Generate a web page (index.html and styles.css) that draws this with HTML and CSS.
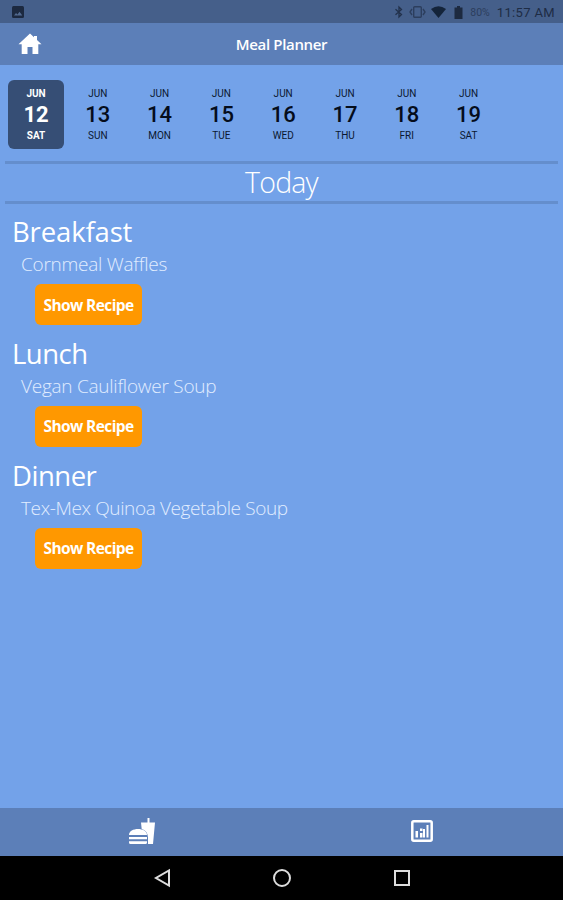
FILE: index.html
```html
<!DOCTYPE html>
<html lang="en">
  <head>
    <meta charset="UTF-8" />
    <meta name="viewport" content="width=device-width, initial-scale=1.0" />
    <title>Meal Planner</title>
    <link rel="stylesheet" href="styles.css">
  </head>
  <body>
    <div class="status-bar">
      <svg class="photo" width="12" height="12" viewBox="0 0 12 12">
        <rect width="12" height="12" rx="1.5" fill="#1c2940" />
        <path d="M2 9.5l2-2.600 1.500 1.600 2-2.800 2.800 3.800z" fill="#526a90" />
      </svg>
      <svg class="bluetooth" width="10" height="14" viewBox="0 0 10 14" fill="none" stroke="#22314b" stroke-width="1.300">
        <path d="M1.500 4.300L7.500 9.500 5 12V2l2.500 2.500-6 5.200" />
      </svg>
      <svg class="vibrate" width="17" height="12" viewBox="0 0 17 12" fill="none" stroke="#2c3e5d" stroke-width="1.400">
        <rect x="4.700" y=".8" width="7.600" height="10.400" rx="1" />
        <path d="M3 3L1 6l2 3M14 3l2 3-2 3" />
      </svg>
      <svg class="wifi" width="15" height="12" viewBox="0 0 15 12">
        <path d="M0 3Q7.500-2.500 15 3L7.500 12z" fill="#14243a" />
      </svg>
      <svg class="battery" width="9" height="13" viewBox="0 0 9 13">
        <path d="M3 0h3v1.500h2.500V13H.5V1.500H3z" fill="#1d2a40" />
      </svg>
      <span class="percent">80%</span>
      <span class="clock">11:57 AM</span>
    </div>

    <header class="header">
      <svg class="home" width="24" height="22" viewBox="0 0 24 22">
        <path d="M12 .5L.5 11.300h3.200V21h5.800v-7h5v7h5.800v-9.700h3.200L19 7V3h-3v1.300z" fill="#fff" />
      </svg>
      <h1>Meal Planner</h1>
    </header>

    <main>
      <div class="dates">
        <div class="date selected"><span>JUN</span><b>12</b><span>SAT</span></div>
        <div class="date"><span>JUN</span><b>13</b><span>SUN</span></div>
        <div class="date"><span>JUN</span><b>14</b><span>MON</span></div>
        <div class="date"><span>JUN</span><b>15</b><span>TUE</span></div>
        <div class="date"><span>JUN</span><b>16</b><span>WED</span></div>
        <div class="date"><span>JUN</span><b>17</b><span>THU</span></div>
        <div class="date"><span>JUN</span><b>18</b><span>FRI</span></div>
        <div class="date"><span>JUN</span><b>19</b><span>SAT</span></div>
      </div>

      <div class="today"><span>Today</span></div>

      <section class="meal">
        <h2 class="breakfast">Breakfast</h2>
        <p>Cornmeal Waffles</p>
        <button type="button">Show Recipe</button>
      </section>
      <section class="meal">
        <h2>Lunch</h2>
        <p>Vegan Cauliflower Soup</p>
        <button type="button">Show Recipe</button>
      </section>
      <section class="meal">
        <h2>Dinner</h2>
        <p class="quinoa">Tex-Mex Quinoa Vegetable Soup</p>
        <button type="button">Show Recipe</button>
      </section>
    </main>

    <nav class="tabs">
      <svg width="28" height="28" viewBox="0 0 28 28" fill="#fff">
        <path d="M13 5.500h6.500V1h2v4.500H27L25 27h-5v-6c0-5-2.500-8-6.300-9z" />
        <path d="M1 18c0-8 18-8 18 0zM1 20h18v2.200H1zM1 24.300h18v1.200q0 1.500-1.500 1.500h-15Q1 27 1 25.500z" />
      </svg>
      <svg width="22" height="22" viewBox="0 0 22 22">
        <rect x="1.300" y="1.300" width="19.400" height="19.400" rx="1.500" fill="none" stroke="#fff" stroke-width="2.500" />
        <path d="M4.500 11h2.500v6.500H4.500zM9 13h2.500v4.500H9zM9 8.500h2.500v2.500H9zM12 9h2v8.500h-2zM15.500 5h2v12.500h-2z" fill="#fff" />
      </svg>
    </nav>

    <div class="system-nav">
      <svg width="20" height="20" viewBox="0 0 20 20">
        <path d="M17 2.500v15L4 10z" />
      </svg>
      <svg width="20" height="20" viewBox="0 0 20 20">
        <circle cx="10" cy="10" r="8" />
      </svg>
      <svg width="20" height="20" viewBox="0 0 20 20">
        <rect x="3" y="3" width="14" height="14" />
      </svg>
    </div>
  </body>
</html>
```
FILE: styles.css
```css
* {
  margin: 0;
  padding: 0;
  box-sizing: border-box;
}
body {
  display: flex;
  flex-direction: column;
  height: 900px;
  overflow: hidden;
  font-family: "Open Sans", sans-serif;
  background-color: #73a2e9;
  color: #fff;
}
svg {
  flex: none;
}
.status-bar {
  display: flex;
  align-items: center;
  height: 23px;
  padding: 1px 8px 0 12px;
  background-color: #455f8a;
  font-family: Roboto, sans-serif;
  color: #1e2c45;
}
.bluetooth {
  margin-left: auto;
}
.vibrate {
  margin-left: 5px;
}
.wifi {
  margin-left: 5px;
}
.battery {
  margin-left: 8px;
}
.percent {
  margin-left: 7px;
  font-size: 10.5px;
  color: #2c3e5d;
}
.clock {
  margin-left: 7px;
  font-size: 13px;
  letter-spacing: 0.35px;
}
.header {
  display: grid;
  grid-template-columns: 1fr auto 1fr;
  align-items: center;
  height: 42px;
  padding: 0 18px 1px;
  background-color: #5c7fb8;
}
.header h1 {
  font-size: 15px;
  font-weight: 600;
  letter-spacing: -0.35px;
}
main {
  flex: 1;
}
.dates {
  display: flex;
  gap: 5.8px;
  padding: 15px 8px 12px;
}
.date {
  display: flex;
  flex-direction: column;
  align-items: center;
  width: 56px;
  height: 69px;
  padding-top: 7px;
  border-radius: 6px;
  font-family: Roboto, sans-serif;
  color: #0b1830;
}
.date span {
  font-size: 10px;
  line-height: 13px;
}
.date b {
  font-size: 22px;
  font-weight: 500;
  line-height: 29px;
  color: #050d1c;
}
.selected {
  background-color: #364e75;
}
.date.selected span,
.date.selected b {
  color: #fff;
  font-weight: 700;
}
.today {
  height: 43px;
  margin: 0 5px 11px;
  border-top: 3px solid #648ecd;
  border-bottom: 3px solid #648ecd;
  text-align: center;
  font-size: 28.5px;
  font-weight: 300;
  line-height: 36px;
  letter-spacing: -0.8px;
}
.meal {
  height: 121.8px;
  padding-left: 12px;
}
.meal h2 {
  font-size: 27.5px;
  font-weight: 400;
  line-height: 34px;
  letter-spacing: -0.5px;
}
.meal .breakfast {
  letter-spacing: -0.15px;
}
.meal p {
  padding: 1px 0 0 9px;
  font-size: 19px;
  font-weight: 300;
  line-height: 28px;
  letter-spacing: -0.25px;
  color: #e1edff;
}
.meal .quinoa {
  letter-spacing: -0.38px;
}
.meal button {
  display: block;
  width: 107px;
  height: 41px;
  margin: 6px 0 0 23px;
  border: none;
  border-radius: 6px;
  background-color: #ff9800;
  color: #fff;
  font-family: inherit;
  font-size: 15.5px;
  font-weight: 700;
  letter-spacing: -0.6px;
  white-space: nowrap;
}
.tabs {
  display: flex;
  justify-content: space-around;
  align-items: center;
  height: 48px;
  padding: 0 3px 3px 0;
  background-color: #5c7fb8;
}
.system-nav {
  display: flex;
  justify-content: center;
  align-items: center;
  gap: 100px;
  height: 44px;
  background-color: #000;
  fill: none;
  stroke: #ddd;
  stroke-width: 2;
}
```
